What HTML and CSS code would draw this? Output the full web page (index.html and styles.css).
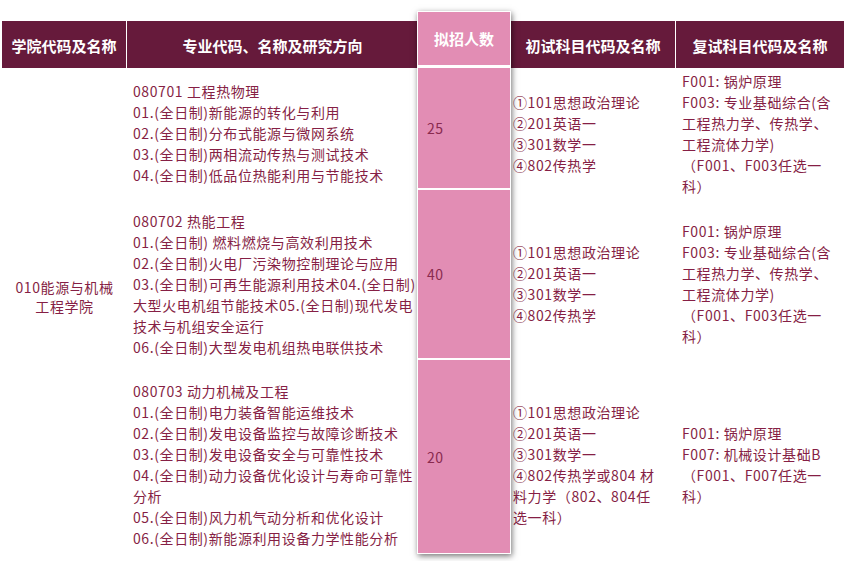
FILE: index.html
```html
<!DOCTYPE html>
<html lang="zh-CN">
<head>
<meta charset="utf-8">
<title>招生目录</title>
<link rel="stylesheet" href="styles.css">
</head>
<body>
<div class="page">
  <div class="table">
    <div class="th col1">学院代码及名称</div>
    <div class="th col2">专业代码、名称及研究方向</div>
    <div class="quota">
      <div class="q-head">拟招人数</div>
      <div class="q-cell q1">25</div>
      <div class="q-cell q2">40</div>
      <div class="q-cell q3">20</div>
    </div>
    <div class="th col4">初试科目代码及名称</div>
    <div class="th col5">复试科目代码及名称</div>

    <div class="college">010能源与机械<br>工程学院</div>

    <div class="major r1">
      080701 工程热物理<br>
      01.(全日制)新能源的转化与利用<br>
      02.(全日制)分布式能源与微网系统<br>
      03.(全日制)两相流动传热与测试技术<br>
      04.(全日制)低品位热能利用与节能技术
    </div>
    <div class="exam r1">①101思想政治理论<br>②201英语一<br>③301数学一<br>④802传热学</div>
    <div class="retest r1">F001: 锅炉原理<br>F003: 专业基础综合(含<br>工程热力学、传热学、<br>工程流体力学)<br>（F001、F003任选一<br>科）</div>

    <div class="major r2">
      080702 热能工程<br>
      01.(全日制) 燃料燃烧与高效利用技术<br>
      02.(全日制)火电厂污染物控制理论与应用<br>
      03.(全日制)可再生能源利用技术04.(全日制)<br>
      大型火电机组节能技术05.(全日制)现代发电<br>
      技术与机组安全运行<br>
      06.(全日制)大型发电机组热电联供技术
    </div>
    <div class="exam r2">①101思想政治理论<br>②201英语一<br>③301数学一<br>④802传热学</div>
    <div class="retest r2">F001: 锅炉原理<br>F003: 专业基础综合(含<br>工程热力学、传热学、<br>工程流体力学)<br>（F001、F003任选一<br>科）</div>

    <div class="major r3">
      080703 动力机械及工程<br>
      01.(全日制)电力装备智能运维技术<br>
      02.(全日制)发电设备监控与故障诊断技术<br>
      03.(全日制)发电设备安全与可靠性技术<br>
      04.(全日制)动力设备优化设计与寿命可靠性<br>
      分析<br>
      05.(全日制)风力机气动分析和优化设计<br>
      06.(全日制)新能源利用设备力学性能分析
    </div>
    <div class="exam r3">①101思想政治理论<br>②201英语一<br>③301数学一<br>④802传热学或804 材<br>料力学（802、804任<br>选一科）</div>
    <div class="retest r3">F001: 锅炉原理<br>F007: 机械设计基础B<br>（F001、F007任选一<br>科）</div>
  </div>
</div>
</body>
</html>
```

FILE: styles.css
```css
* { box-sizing: border-box; }

html, body {
  margin: 0;
  padding: 0;
  background: #ffffff;
}

body {
  font-family: "Noto Sans CJK SC", "Noto Sans", sans-serif;
  font-size: 14px;
  color: #861f45;
}

.page {
  padding: 21px 0 0 2px;
  width: 844px;
}

.table {
  display: grid;
  grid-template-columns: 125px 291px 93px 165px 168px;
  grid-template-rows: 47px 131px 170px 192px;
}

.th {
  background: #661a3b;
  color: #ffffff;
  font-weight: bold;
  font-size: 15px;
  display: flex;
  align-items: center;
  justify-content: center;
  grid-row: 1;
  padding-top: 2px;
}
.th.col1 { grid-column: 1; border-right: 1px solid #ffffff; }
.th.col2 { grid-column: 2; }
.th.col4 { grid-column: 4; border-right: 1px solid #ffffff; }
.th.col5 { grid-column: 5; }

.quota {
  grid-column: 3;
  grid-row: 1 / 5;
  align-self: start;
  margin-top: -10px;
  margin-left: -1px;
  position: relative;
  z-index: 2;
  display: flex;
  flex-direction: column;
  background: #ffffff;
  border: 1px solid #ffffff;
  box-shadow: 1px 2px 6px rgba(0, 0, 0, 0.55);
  width: 94px;
}

.q-head {
  height: 53px;
  background: #e28db4;
  color: #ffffff;
  font-weight: bold;
  font-size: 15px;
  display: flex;
  align-items: center;
  justify-content: center;
  margin-bottom: 3px;
}

.q-cell {
  background: #e28db4;
  color: #8a2a4f;
  display: flex;
  align-items: center;
  padding-left: 9px;
  letter-spacing: 0.5px;
}
.q1 { height: 120px; margin-bottom: 2px; }
.q2 { height: 168px; margin-bottom: 2px; }
.q3 { height: 193px; }

.college {
  grid-column: 1;
  grid-row: 2 / 5;
  display: flex;
  align-items: center;
  justify-content: center;
  text-align: center;
  line-height: 19px;
  letter-spacing: 0.6px;
  padding: 0 4px 35px 4px;
}

.major, .exam, .retest {
  display: block;
  align-self: center;
  line-height: 21px;
  white-space: nowrap;
  letter-spacing: 0.6px;
}

.major { grid-column: 2; padding-left: 6px; }
.exam { grid-column: 4; padding-left: 2px; }
.retest { grid-column: 5; padding-left: 6px; }

.r1 { grid-row: 2; }
.r2 { grid-row: 3; }
.r3 { grid-row: 4; }
```
